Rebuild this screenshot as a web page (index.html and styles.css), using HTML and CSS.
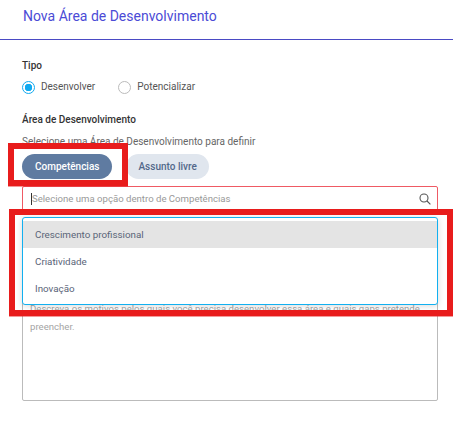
FILE: index.html
```html
<!DOCTYPE html>
<html lang="pt-BR">
<head>
    <meta charset="UTF-8">
    <meta name="viewport" content="width=device-width, initial-scale=1.0">
    <title>Nova Área de Desenvolvimento</title>
    <link rel="stylesheet" href="styles.css">
</head>
<body>
    <div class="header">
        <h1>Nova Área de Desenvolvimento</h1>
    </div>

    <div class="content">
        <div class="field-label">Tipo</div>
        <div class="radio-row">
            <label class="radio"><span class="radio-dot checked"></span>Desenvolver</label>
            <label class="radio"><span class="radio-dot"></span>Potencializar</label>
        </div>

        <div class="field-label area-label">Área de Desenvolvimento</div>
        <p class="helper">Selecione uma Área de Desenvolvimento para definir</p>

        <div class="pills">
            <span class="pill active">Competências</span>
            <span class="pill">Assunto livre</span>
        </div>

        <div class="select-wrap">
            <div class="search-box">
                <span class="caret"></span>
                <span class="placeholder">Selecione uma opção dentro de Competências</span>
                <svg class="search-icon" width="12" height="12" viewBox="0 0 12 12" fill="none" stroke="#555" stroke-width="1.1">
                    <circle cx="5" cy="5" r="4"/>
                    <path d="M8 8l3.4 3.4"/>
                </svg>
            </div>
            <ul class="options">
                <li class="option selected">Crescimento profissional</li>
                <li class="option">Criatividade</li>
                <li class="option">Inovação</li>
            </ul>
        </div>

        <div class="textarea-box">Descreva os motivos pelos quais você precisa desenvolver essa área e quais gaps pretende preencher.</div>
    </div>

    <!-- marcacoes vermelhas do print -->
    <div class="mark mark-pill"></div>
    <div class="mark mark-list"></div>
</body>
</html>
```

FILE: styles.css
```css
html, body {
    height: 426px;
    overflow: hidden;
}
body {
    font-family: Roboto, Arial, sans-serif;
    margin: 0;
    background-color: white;
    color: #444;
    font-size: 10px;
    position: relative;
}
.header {
    height: 40px;
    box-sizing: border-box;
    padding: 7px 23px 0;
    border-bottom: 1px solid #4a4ac4;
}
h1 {
    margin: 0;
    font-size: 14px;
    line-height: 18px;
    font-weight: 400;
    color: #4b4bd6;
}
.content {
    padding: 19px 15px 0 22px;
}
.field-label {
    font-weight: 500;
    line-height: 14px;
    color: #333;
}
.radio-row {
    display: flex;
    gap: 23px;
    margin-top: 7px;
}
.radio {
    display: flex;
    align-items: center;
    gap: 6px;
    line-height: 14px;
    color: #555;
}
.radio-dot {
    width: 11px;
    height: 11px;
    border: 1px solid #bbb;
    border-radius: 50%;
}
.radio-dot.checked {
    border-color: #12aaf0;
    background: radial-gradient(circle, #12aaf0 0 3.5px, white 4px);
}
.area-label {
    margin-top: 19px;
}
.helper {
    margin: 8px 0 0;
    line-height: 14px;
    color: #666;
}
.pills {
    display: flex;
    gap: 14px;
    margin-top: 5px;
}
.pill {
    height: 25px;
    line-height: 25px;
    padding: 0 12px;
    border-radius: 13px;
    background-color: #e0e6ee;
    color: #52688a;
    font-weight: 500;
}
.pill.active {
    padding: 0 13px;
    background-color: #5f7ba1;
    color: white;
}
.select-wrap {
    position: relative;
    margin-top: 7px;
}
.search-box {
    height: 25px;
    box-sizing: border-box;
    border: 1px solid #ef5a64;
    border-radius: 2px;
    display: flex;
    align-items: center;
    padding: 0 6px 0 8px;
}
.caret {
    width: 1px;
    height: 12px;
    background-color: #333;
}
.placeholder {
    flex: 1;
    font-size: 9.6px;
    color: #999;
}
.search-icon {
    flex: none;
}
.options {
    position: absolute;
    top: 31px;
    left: 0;
    right: 0;
    margin: 0;
    padding: 3px 0 2px;
    list-style: none;
    background-color: white;
    border: 1px solid #12b0f0;
    border-radius: 3px;
    box-shadow: 0 1px 6px rgba(0,0,0,0.15);
}
.option {
    height: 27px;
    line-height: 27px;
    padding: 0 12px;
    font-size: 9.8px;
    color: #5a6478;
}
.option.selected {
    background-color: #e4e4e4;
}
.textarea-box {
    margin-top: 79px;
    height: 111px;
    box-sizing: border-box;
    border: 1px solid #bbb;
    border-radius: 2px;
    padding: 9px 7px;
    font-size: 9.6px;
    line-height: 18px;
    color: #a5a5a5;
}
.mark {
    position: absolute;
    border: 6px solid #e81c1c;
    box-sizing: border-box;
    box-shadow: 0 1px 0 rgba(232,28,28,0.45);
}
.mark-pill {
    left: 8px;
    top: 143px;
    width: 120px;
    height: 43px;
}
.mark-list {
    left: 9px;
    top: 209px;
    width: 444px;
    height: 107px;
}
```
